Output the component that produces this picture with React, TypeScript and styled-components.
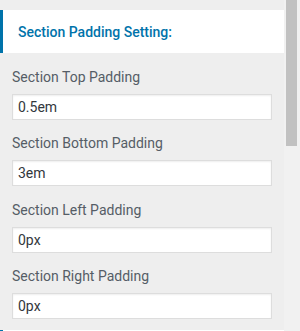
import { createGlobalStyle } from "styled-components";
import styled from "styled-components";

const GlobalStyle = createGlobalStyle`
  html, body {
    margin: 0;
    padding: 0;
    background: #eeeeee;
  }
  * {
    box-sizing: border-box;
  }
`;

const Panel = styled.div`
  width: 300px;
  height: 331px;
  display: flex;
  overflow: hidden;
  background: #eeeeee;
  font-family: Roboto, "Liberation Sans", sans-serif;
`;

const Content = styled.div`
  flex: 1;
  min-width: 0;
  padding-top: 10px;
`;

const ScrollTrack = styled.div`
  width: 16px;
  flex-shrink: 0;
  background: #f1f1f1;
  padding-left: 2px;
  padding-right: 3px;
`;

const ScrollThumb = styled.div`
  height: 146px;
  background: #c1c1c1;
`;

const SectionHeader = styled.div`
  height: 43px;
  display: flex;
  align-items: center;
  background: #ffffff;
  border-left: 3px solid #0073aa;
  padding-left: 15px;
  color: #0073aa;
  font-size: 14px;
  font-weight: 500;
`;

const Fields = styled.div`
  display: flex;
  flex-direction: column;
  gap: 13.33px;
  padding: 14px 12px 11px;
`;

const Field = styled.div`
  display: flex;
  flex-direction: column;
`;

const Label = styled.label`
  font-size: 14px;
  line-height: 20px;
  color: #555d66;
  margin-bottom: 7px;
`;

const TextInput = styled.input`
  height: 26px;
  width: 100%;
  border: 1px solid #dddddd;
  box-shadow: inset 0 1px 2px rgba(0, 0, 0, 0.07);
  background: #ffffff;
  padding: 0 5px;
  font-family: Roboto, "Liberation Sans", sans-serif;
  font-size: 14px;
  color: #32373c;
  outline: none;
  margin: 0;
`;

type Setting = { label: string; value: string };

const sections: { title: string; fields: Setting[] }[] = [
  {
    title: "Section Padding Setting:",
    fields: [
      { label: "Section Top Padding", value: "0.5em" },
      { label: "Section Bottom Padding", value: "3em" },
      { label: "Section Left Padding", value: "0px" },
      { label: "Section Right Padding", value: "0px" },
    ],
  },
  {
    title: "Section Margin Setting:",
    fields: [
      { label: "Section Top Margin", value: "0px" },
      { label: "Section Bottom Margin", value: "0px" },
    ],
  },
];

export default function App() {
  return (
    <>
      <GlobalStyle />
      <Panel>
        <Content>
          {sections.map((section) => (
            <div key={section.title}>
              <SectionHeader>{section.title}</SectionHeader>
              <Fields>
                {section.fields.map((f) => (
                  <Field key={f.label}>
                    <Label>{f.label}</Label>
                    <TextInput type="text" defaultValue={f.value} />
                  </Field>
                ))}
              </Fields>
            </div>
          ))}
        </Content>
        <ScrollTrack>
          <ScrollThumb />
        </ScrollTrack>
      </Panel>
    </>
  );
}
